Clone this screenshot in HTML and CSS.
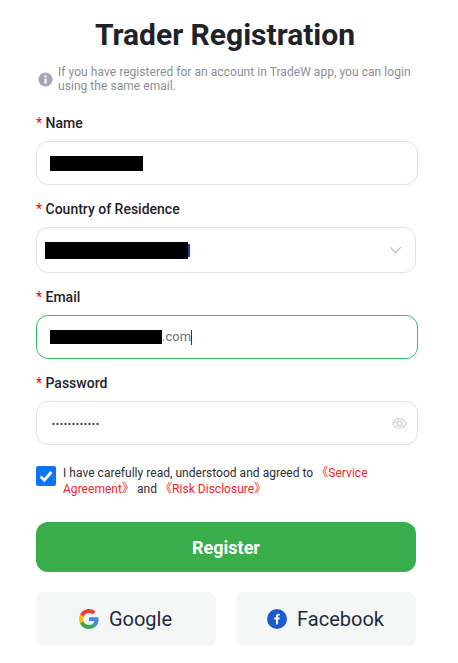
FILE: index.html
```html
<!DOCTYPE html>
<html lang="en">
<head>
<meta charset="utf-8">
<title>Trader Registration</title>
<link rel="stylesheet" href="styles.css">
</head>
<body>
<main class="form">
  <h1 class="title">Trader Registration</h1>
  <div class="hint">
    <svg class="hint-icon" viewBox="0 0 16 16" width="15" height="15"><circle cx="8" cy="8" r="7.5" fill="#a4a8b4"/><circle cx="8" cy="4.6" r="1.25" fill="#fff"/><rect x="6.9" y="6.9" width="2.2" height="5.6" rx="0.4" fill="#fff"/></svg>
    <p class="hint-text">If you have registered for an account in TradeW app, you can login using the same email.</p>
  </div>

  <div class="field field-name">
    <div class="label"><span class="star">*</span> Name</div>
    <div class="input"><span class="redact redact-name"></span></div>
  </div>

  <div class="field">
    <div class="label"><span class="star">*</span> Country of Residence</div>
    <div class="input select">
      <span class="country"><span class="redact redact-country"></span><span class="sliver"></span></span>
      <svg class="chevron" viewBox="0 0 14 9" width="13" height="8"><path d="M1 1.2 L7 7.4 L13 1.2" fill="none" stroke="#b4b6bc" stroke-width="1.3"/></svg>
    </div>
  </div>

  <div class="field">
    <div class="label"><span class="star">*</span> Email</div>
    <div class="input focused"><span class="redact redact-email"></span><span class="value">.com</span><span class="caret"></span></div>
  </div>

  <div class="field">
    <div class="label"><span class="star">*</span> Password</div>
    <div class="input password">
      <span class="dots">&bull;&bull;&bull;&bull;&bull;&bull;&bull;&bull;&bull;&bull;&bull;&bull;</span>
      <svg class="eye" viewBox="0 0 16 12" width="15" height="11"><path d="M0.7 6 C3 2 5.4 0.9 8 0.9 C10.6 0.9 13 2 15.3 6 C13 10 10.6 11.1 8 11.1 C5.4 11.1 3 10 0.7 6 Z" fill="none" stroke="#c3c6cc" stroke-width="1.1"/><circle cx="8" cy="6" r="2.7" fill="none" stroke="#c3c6cc" stroke-width="1.1"/></svg>
    </div>
  </div>

  <div class="agree">
    <span class="checkbox"><svg viewBox="0 0 20 20" width="20" height="20"><path d="M4.6 10.6 L8.3 14.2 L15.4 6" fill="none" stroke="#fff" stroke-width="2.8"/></svg></span>
    <p class="agree-text">I have carefully read, understood and agreed to <span class="link">《Service Agreement》</span> and <span class="link">《Risk Disclosure》</span></p>
  </div>

  <button class="register" type="button">Register</button>

  <div class="socials">
    <button class="social" type="button">
      <svg viewBox="0 0 48 48" width="20" height="20"><path fill="#EA4335" d="M24 9.5c3.54 0 6.71 1.22 9.21 3.6l6.85-6.85C35.9 2.38 30.47 0 24 0 14.62 0 6.51 5.38 2.56 13.22l7.98 6.19C12.43 13.72 17.74 9.5 24 9.5z"/><path fill="#4285F4" d="M46.98 24.55c0-1.57-.15-3.09-.38-4.55H24v9.02h12.94c-.58 2.96-2.26 5.48-4.78 7.18l7.73 6c4.51-4.18 7.09-10.36 7.09-17.65z"/><path fill="#FBBC05" d="M10.53 28.59c-.48-1.45-.76-2.99-.76-4.59s.27-3.14.76-4.59l-7.98-6.19C.92 16.46 0 20.12 0 24c0 3.88.92 7.54 2.56 10.78l7.97-6.19z"/><path fill="#34A853" d="M24 48c6.48 0 11.93-2.13 15.89-5.81l-7.73-6c-2.15 1.45-4.92 2.3-8.16 2.3-6.26 0-11.57-4.22-13.47-9.91l-7.98 6.19C6.51 42.62 14.62 48 24 48z"/></svg>
      <span>Google</span>
    </button>
    <button class="social" type="button">
      <svg viewBox="0 0 20 20" width="20" height="20"><circle cx="10" cy="10" r="10" fill="#1a5bce"/><path fill="#fff" d="M10.9 15.4V10.5h1.6l.25-1.9H10.9V7.4c0-.55.15-.93.95-.93h1V4.8c-.18-.02-.77-.08-1.46-.08-1.45 0-2.44.88-2.44 2.5v1.38H7.3v1.9h1.65v4.9z"/></svg>
      <span>Facebook</span>
    </button>
  </div>
</main>
</body>
</html>
```

FILE: styles.css
```css
* { box-sizing: border-box; }

html, body {
  margin: 0;
  padding: 0;
  background: #fff;
}

body {
  font-family: Roboto, "Noto Sans CJK SC", "Liberation Sans", sans-serif;
  color: #1f2229;
  overflow: hidden;
}

.form {
  width: 382px;
  margin-left: 36px;
  padding-top: 16px;
}

.title {
  margin: 0;
  width: 378px;
  text-align: center;
  font-size: 30px;
  line-height: 38px;
  font-weight: 700;
  color: #1f2229;
}

.hint {
  display: flex;
  align-items: center;
  gap: 5px;
  margin-top: 11px;
  padding-left: 2px;
}

.hint-icon { flex: none; }

.hint-text {
  margin: 0;
  font-size: 12px;
  line-height: 14px;
  letter-spacing: 0.05px;
  color: #8b8e96;
}

.field { margin-top: 15px; }
.field-name { margin-top: 21px; }

.label {
  font-size: 14px;
  line-height: 18px;
  font-weight: 500;
  color: #1f2229;
  height: 18px;
}

.star {
  color: #f00;
  font-weight: 400;
}

.input {
  display: flex;
  align-items: center;
  height: 44px;
  margin-top: 9px;
  padding: 0 13px;
  border: 1px solid #dfe0e8;
  border-radius: 12px;
  background: #fff;
}

.select {
  width: 380px;
  height: 46px;
  padding: 0 13px 0 8px;
  justify-content: space-between;
}

.focused { border-color: #2fc05f; }

.redact {
  display: block;
  background: #000;
  flex: none;
}

.redact-name { width: 93px; height: 15px; }
.redact-country { width: 143px; height: 17px; }
.redact-email { width: 112px; height: 14px; }

.country {
  display: flex;
  align-items: center;
}

.sliver {
  width: 2px;
  height: 13px;
  background: #1440c8;
}

.value {
  font-size: 13px;
  line-height: 16px;
  color: #6b6f78;
}

.caret {
  width: 1px;
  height: 15px;
  background: #333;
}

.password {
  justify-content: space-between;
  padding: 0 10px 0 15px;
}

.dots {
  font-family: "Liberation Sans", sans-serif;
  font-size: 8px;
  font-weight: 700;
  letter-spacing: 1.2px;
  color: #40444c;
}

.eye, .chevron { flex: none; }

.agree {
  display: flex;
  align-items: flex-start;
  gap: 7px;
  margin-top: 20px;
  width: 352px;
}

.checkbox {
  flex: none;
  width: 20px;
  height: 20px;
  margin-top: 1px;
  border-radius: 2px;
  background: #0b76f5;
  display: block;
}

.checkbox svg { display: block; }

.agree-text {
  margin: 0;
  font-size: 12px;
  line-height: 16px;
  letter-spacing: 0.03px;
  color: #2a2e38;
}

.link { color: #f5222d; }

.register {
  display: block;
  width: 380px;
  height: 50px;
  margin-top: 25px;
  border: 0;
  border-radius: 12px;
  background: #39ad4a;
  color: #fff;
  font-family: inherit;
  font-size: 18px;
  font-weight: 700;
}

.socials {
  display: flex;
  gap: 20px;
  width: 380px;
  margin-top: 20px;
}

.social {
  flex: 1;
  height: 54px;
  display: flex;
  align-items: center;
  justify-content: center;
  gap: 10px;
  padding: 0 1px 0 0;
  border: 0;
  border-radius: 8px;
  background: #f5f7f7;
  color: #1f2a3c;
  font-family: inherit;
  font-size: 20px;
}
```
